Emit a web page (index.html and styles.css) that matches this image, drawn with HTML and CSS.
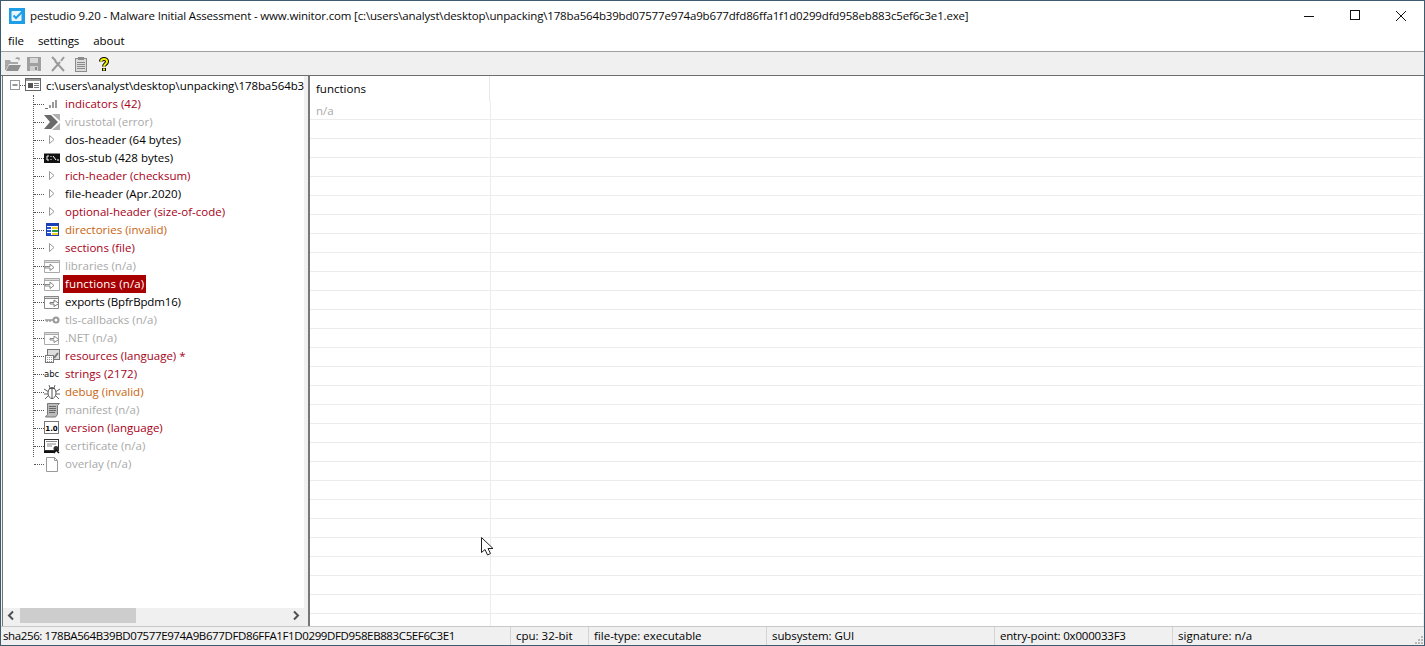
FILE: index.html
```html
<!DOCTYPE html>
<html lang="en">
<head>
<meta charset="utf-8">
<title>pestudio 9.20</title>
<link rel="stylesheet" href="styles.css">
</head>
<body>
<div class="window">
  <header class="titlebar">
    <svg class="app-icon" width="16" height="16" viewBox="0 0 16 16"><rect width="16" height="16" fill="#1f9ee8"/><rect x="2.500" y="3" width="10" height="10" rx="1" fill="#e8f5fd"/><path d="M4.500 7.500l2.500 2.500L14 3" fill="none" stroke="#1f9ee8" stroke-width="2"/></svg>
    <span class="title-text">pestudio 9.20 - Malware Initial Assessment - www.winitor.com [c:\users\analyst\desktop\unpacking\178ba564b39bd07577e974a9b677dfd86ffa1f1d0299dfd958eb883c5ef6c3e1.exe]</span>
    <div class="win-buttons">
      <svg class="win-btn" width="46" height="29" viewBox="0 0 46 29"><path d="M18 15.500h10" stroke="#111" fill="none"/></svg>
      <svg class="win-btn" width="46" height="29" viewBox="0 0 46 29"><rect x="18.500" y="9.500" width="9" height="9" stroke="#111" fill="none"/></svg>
      <svg class="win-btn" width="46" height="29" viewBox="0 0 46 29"><path d="M18 10l10 10M28 10L18 20" stroke="#111" fill="none"/></svg>
    </div>
  </header>
  <nav class="menubar"><span>file</span><span>settings</span><span>about</span></nav>
  <div class="toolbar">
    <svg class="tb-folder" width="18" height="16" viewBox="0 0 18 16"><path d="M1 14V4h5l1 2h7v2H5L2 14z" fill="#a8a8a8"/><path d="M5 9h12l-3 6H2z" fill="#909090"/><path d="M11 3l2-2 3 1-1 3-1-2z" fill="#a0a0a0"/></svg>
    <svg class="tb-save" width="16" height="16" viewBox="0 0 16 16"><path d="M1 1h14v14H1z" fill="#a0a0a0"/><rect x="4" y="2" width="8" height="5" fill="#d8d8d8"/><rect x="4" y="10" width="8" height="5" fill="#cfcfcf"/><rect x="9" y="11" width="2" height="3" fill="#8a8a8a"/></svg>
    <svg width="16" height="16" viewBox="0 0 16 16"><path d="M2 15L10 6M14 15L5 5M2 1l4 4M14 1l-3 4" stroke="#9a9a9a" stroke-width="2" fill="none"/></svg>
    <svg width="14" height="16" viewBox="0 0 14 16"><rect x="1.500" y="2.500" width="11" height="13" fill="#dcdcdc" stroke="#8c8c8c"/><rect x="4" y="1" width="6" height="3" fill="#8c8c8c"/><path d="M3 6.500h8M3 8.500h8M3 10.500h8M3 12.500h8" stroke="#8c8c8c"/></svg>
    <svg class="tb-help" width="12" height="16" viewBox="0 0 12 16"><path d="M3 5.500C3 2 9 2 9 5.500 9 8 6 8 6 10.500" fill="none" stroke="#000" stroke-width="4"/><path d="M6 12v3" stroke="#000" stroke-width="4"/><path d="M3 5.500C3 2 9 2 9 5.500 9 8 6 8 6 10.500" fill="none" stroke="#f5f000" stroke-width="2"/><path d="M6 12.500v2" stroke="#f5f000" stroke-width="2"/></svg>
  </div>
  <main class="panes">
    <section class="tree-pane">
      <div class="tree">
        <div class="root-row">
          <svg class="expander" width="11" height="11" viewBox="0 0 11 11"><rect x=".5" y=".5" width="9" height="9" fill="#fff" stroke="#999"/><path d="M2.500 5h5" stroke="#333"/></svg>
          <i class="dash short"></i>
          <svg class="ico" width="16" height="14" viewBox="0 0 16 14"><rect x=".5" y=".5" width="15" height="12" fill="#fff" stroke="#666"/><rect x="1" y="1" width="14" height="2" fill="#999"/><rect x="3" y="5" width="5" height="5" fill="#555"/><path d="M9 5.500h5M9 7.500h5M9 9.500h5" stroke="#777"/></svg>
          <span class="root-label">c:\users\analyst\desktop\unpacking\178ba564b3</span>
        </div>
        <ul class="nodes">
          <li><i class="dash"></i><svg class="ico" width="16" height="16" viewBox="0 0 16 16"><path d="M5 12h2V9H5zM8 12h2V6H8zM11 12h2V4h-2z" fill="#9a9a9a"/><path d="M1 12.500h3" stroke="#777"/></svg><span class="red">indicators (42)</span></li>
          <li><i class="dash"></i><svg class="ico" width="16" height="16" viewBox="0 0 16 16"><path d="M0 1h7l7 7-7 7H0l6-7z" fill="#6a6a6a"/><path d="M8 0h8v7zM8 16h8V9z" fill="#b0b0b0"/></svg><span class="off">virustotal (error)</span></li>
          <li><i class="dash"></i><svg class="ico" width="16" height="16" viewBox="0 0 16 16"><path d="M5.500 3.500l4.500 4-4.500 4z" fill="#fff" stroke="#999"/></svg><span class="ok">dos-header (64 bytes)</span></li>
          <li><i class="dash"></i><svg class="ico" width="16" height="16" viewBox="0 0 16 16"><rect y="3" width="16" height="10" fill="#111"/><rect y="3" width="16" height="1" fill="#888"/><path d="M5 6H3v4h2M7 6v1M7 9v1M9 6l3 4M13 10h2" stroke="#fff" fill="none"/></svg><span class="ok">dos-stub (428 bytes)</span></li>
          <li><i class="dash"></i><svg class="ico" width="16" height="16" viewBox="0 0 16 16"><path d="M5.500 3.500l4.500 4-4.500 4z" fill="#fff" stroke="#999"/></svg><span class="red">rich-header (checksum)</span></li>
          <li><i class="dash"></i><svg class="ico" width="16" height="16" viewBox="0 0 16 16"><path d="M5.500 3.500l4.500 4-4.500 4z" fill="#fff" stroke="#999"/></svg><span class="ok">file-header (Apr.2020)</span></li>
          <li><i class="dash"></i><svg class="ico" width="16" height="16" viewBox="0 0 16 16"><path d="M5.500 3.500l4.500 4-4.500 4z" fill="#fff" stroke="#999"/></svg><span class="red">optional-header (size-of-code)</span></li>
          <li><i class="dash"></i><svg class="ico" width="16" height="16" viewBox="0 0 16 16"><rect x="2.500" y="1.500" width="12" height="12" fill="#fff" stroke="#1a3fb5"/><path d="M2 1h13v3H2z" fill="#1a3fb5"/><path d="M3 5h4v2H3zM3 8h4v2H3zM3 11h4v2H3z" fill="#2255cc"/><path d="M8 5h6v2H8zM8 11h6v2H8z" fill="#f0d020"/><path d="M8 8h6v2H8z" fill="#2a9a40"/></svg><span class="warn">directories (invalid)</span></li>
          <li><i class="dash"></i><svg class="ico" width="16" height="16" viewBox="0 0 16 16"><path d="M5.500 3.500l4.500 4-4.500 4z" fill="#fff" stroke="#999"/></svg><span class="red">sections (file)</span></li>
          <li><i class="dash"></i><svg class="ico" width="16" height="16" viewBox="0 0 16 16"><path d="M.5 2.500h15v12H.5z" fill="#fff" stroke="#aaa"/><path d="M.5 2.500h15v2H.5z" fill="#ddd" stroke="#aaa"/><path d="M1 8.500h5V6l4 3.500-4 3V10H1z" fill="#fff" stroke="#888"/></svg><span class="off">libraries (n/a)</span></li>
          <li><i class="dash"></i><svg class="ico" width="16" height="16" viewBox="0 0 16 16"><path d="M.5 2.500h15v12H.5z" fill="#fff" stroke="#aaa"/><path d="M.5 2.500h15v2H.5z" fill="#ddd" stroke="#aaa"/><path d="M1 8.500h5V6l4 3.500-4 3V10H1z" fill="#fff" stroke="#888"/></svg><span class="selected">functions (n/a)</span></li>
          <li><i class="dash"></i><svg class="ico" width="16" height="16" viewBox="0 0 16 16"><path d="M.5 2.500h14v12H.5z" fill="#fff" stroke="#888"/><path d="M.5 2.500h14v2H.5z" fill="#ddd" stroke="#888"/><path d="M6 8.500h4V6l5 3.500-5 3V10H6z" fill="#fff" stroke="#777"/></svg><span class="ok tight">exports (BpfrBpdm16)</span></li>
          <li><i class="dash"></i><svg class="ico" width="16" height="16" viewBox="0 0 16 16"><circle cx="12" cy="8" r="2.500" fill="none" stroke="#999" stroke-width="2"/><path d="M1 8h8M3 8v2M6 8v2" stroke="#999" stroke-width="1.500"/></svg><span class="off">tls-callbacks (n/a)</span></li>
          <li><i class="dash"></i><svg class="ico" width="16" height="16" viewBox="0 0 16 16"><path d="M.5 2.500h14v12H.5z" fill="#fff" stroke="#aaa"/><path d="M.5 2.500h14v2H.5z" fill="#ddd" stroke="#aaa"/><path d="M6 8.500h4V6l5 3.500-5 3V10H6z" fill="#fff" stroke="#888"/></svg><span class="off">.NET (n/a)</span></li>
          <li><i class="dash"></i><svg class="ico" width="16" height="16" viewBox="0 0 16 16"><rect x="3.500" y="1.500" width="12" height="10" fill="#ddd" stroke="#777"/><rect x="1.500" y="7.500" width="8" height="7" fill="#fff" stroke="#777"/><path d="M3 9.500h5M3 11.500h5M3 13.500h5" stroke="#999" stroke-dasharray="1 1"/><path d="M10 10l4-5" stroke="#777" stroke-width="2"/></svg><span class="red">resources (language) *</span></li>
          <li><i class="dash"></i><span class="abc">abc</span><span class="red">strings (2172)</span></li>
          <li><i class="dash"></i><svg class="ico" width="16" height="16" viewBox="0 0 16 16"><ellipse cx="8" cy="9" rx="4" ry="5.500" fill="#fff" stroke="#555"/><path d="M5 4.500h6M8 5v9" stroke="#555"/><path d="M0 5l4 2.500M16 5l-4 2.500M0 10h4M16 10h-4M1 15l3-3M15 15l-3-3M5 1l1 3M11 1l-1 3" stroke="#666" fill="none"/></svg><span class="warn">debug (invalid)</span></li>
          <li><i class="dash"></i><svg class="ico" width="16" height="16" viewBox="0 0 16 16"><path d="M3.500 1.500h12l-2 2v9l-2 2.500h-10l2-2.500z" fill="#bbb" stroke="#777"/><path d="M5 4.500h7M5 6.500h7M5 8.500h7M5 10.500h6" stroke="#666"/></svg><span class="off">manifest (n/a)</span></li>
          <li><i class="dash"></i><svg class="ico" width="16" height="16" viewBox="0 0 16 16"><rect x=".5" y="1.500" width="14" height="12" fill="#fff" stroke="#777"/><text class="ver" x="7.500" y="10.500" text-anchor="middle">1.0</text></svg><span class="red">version (language)</span></li>
          <li><i class="dash"></i><svg class="ico" width="16" height="16" viewBox="0 0 16 16"><rect x=".5" y="1.500" width="14" height="11" fill="#fff" stroke="#333"/><path d="M2 3.500h11M3 6h9M3 8h5" stroke="#888"/><path d="M0 14h11" stroke="#111" stroke-width="2"/><circle cx="12" cy="10.500" r="2.500" fill="#333"/><path d="M10 15l2-3 3 3" stroke="#111" fill="none" stroke-width="1.500"/></svg><span class="off">certificate (n/a)</span></li>
          <li><i class="dash"></i><svg class="ico" width="16" height="16" viewBox="0 0 16 16"><path d="M2.500 1.500h8l3 3v11h-11z" fill="#fff" stroke="#999"/><path d="M10.500 1.500v3h3" fill="none" stroke="#999"/></svg><span class="off">overlay (n/a)</span></li>
        </ul>
      </div>
      <div class="hscroll">
        <svg width="17" height="15" viewBox="0 0 17 15"><path d="M10 3.500L6 7.500l4 4" fill="none" stroke="#505050" stroke-width="2"/></svg>
        <div class="track"><div class="thumb"></div></div>
        <svg width="17" height="15" viewBox="0 0 17 15"><path d="M7 3.500l4 4-4 4" fill="none" stroke="#505050" stroke-width="2"/></svg>
      </div>
    </section>
    <section class="list-pane">
      <div class="list-head"><div class="head-cell">functions</div></div>
      <div class="list-rows">
        <div class="row"><div class="cell">n/a</div></div>
        <div class="row"><div class="cell"></div></div><div class="row"><div class="cell"></div></div><div class="row"><div class="cell"></div></div><div class="row"><div class="cell"></div></div><div class="row"><div class="cell"></div></div><div class="row"><div class="cell"></div></div><div class="row"><div class="cell"></div></div><div class="row"><div class="cell"></div></div><div class="row"><div class="cell"></div></div><div class="row"><div class="cell"></div></div><div class="row"><div class="cell"></div></div><div class="row"><div class="cell"></div></div><div class="row"><div class="cell"></div></div><div class="row"><div class="cell"></div></div><div class="row"><div class="cell"></div></div><div class="row"><div class="cell"></div></div><div class="row"><div class="cell"></div></div><div class="row"><div class="cell"></div></div><div class="row"><div class="cell"></div></div><div class="row"><div class="cell"></div></div><div class="row"><div class="cell"></div></div><div class="row"><div class="cell"></div></div><div class="row"><div class="cell"></div></div><div class="row"><div class="cell"></div></div><div class="row"><div class="cell"></div></div><div class="row"><div class="cell"></div></div><div class="row"><div class="cell"></div></div>
      </div>
      <svg class="cursor" width="14" height="20" viewBox="0 0 14 20"><path d="M.5.500v15l3.500-3 2.500 5.500 3-1.500-2.500-5h5z" fill="#fff" stroke="#222"/></svg>
    </section>
  </main>
  <footer class="statusbar">
    <div class="st st-hash">sha256: 178BA564B39BD07577E974A9B677DFD86FFA1F1D0299DFD958EB883C5EF6C3E1</div>
    <div class="st st-cpu">cpu: 32-bit</div>
    <div class="st st-type">file-type: executable</div>
    <div class="st st-sub">subsystem: GUI</div>
    <div class="st st-entry">entry-point: 0x000033F3</div>
    <div class="st st-sig"><span>signature: n/a</span>
      <svg class="grip" width="10" height="10" viewBox="0 0 10 10"><path d="M7 1h2v2H7zM4 4h2v2H4zM7 4h2v2H7zM1 7h2v2H1zM4 7h2v2H4zM7 7h2v2H7z" fill="#b8b8b8"/></svg>
    </div>
  </footer>
</div>
</body>
</html>
```

FILE: styles.css
```css
* { box-sizing: border-box; }
html, body { margin: 0; padding: 0; }
body {
  width: 1425px;
  height: 646px;
  overflow: hidden;
  font-family: "Open Sans", "Noto Sans", sans-serif;
  font-size: 11.5px;
  color: #000;
  background: #f0f0f0;
}
.window {
  width: 1425px;
  height: 646px;
  display: flex;
  flex-direction: column;
  border: 1px solid #3f5b70;
  overflow: hidden;
}
.titlebar {
  height: 29px;
  flex: none;
  display: flex;
  align-items: center;
  background: #fff;
  padding-left: 8px;
}
.app-icon { flex: none; margin-right: 5px; }
.title-text { flex: 1; white-space: nowrap; color: #0a0a0a; letter-spacing: -0.16px; }
.win-buttons { display: flex; flex: none; }
.win-btn { display: block; }
.menubar {
  height: 22px;
  flex: none;
  display: flex;
  align-items: center;
  gap: 14px;
  padding-left: 7px;
  padding-bottom: 1px;
  background: #fff;
  border-bottom: 1px solid #a0a0a0;
  letter-spacing: -0.06px;
}
.toolbar {
  height: 24px;
  flex: none;
  display: flex;
  align-items: center;
  gap: 8px;
  padding-left: 3px;
  background: #f0f0f0;
  border-bottom: 1px solid #6f6f6f;
}
.tb-folder { margin-right: -4px; }
.tb-help { margin-left: 2px; }
.panes {
  flex: 1;
  min-height: 0;
  display: flex;
  gap: 4px;
  padding-left: 1px;
  padding-right: 1px;
}
.tree-pane {
  width: 302px;
  flex: none;
  display: flex;
  flex-direction: column;
  background: #fff;
  border-left: 1px solid #777;
}
.tree { flex: 1; min-height: 0; overflow: hidden; padding-top: 1px; }
.root-row {
  height: 18px;
  display: flex;
  align-items: center;
  padding-left: 7px;
  padding-bottom: 2px;
  white-space: nowrap;
}
.root-label { letter-spacing: -0.08px; }
.expander { flex: none; }
.dash {
  display: block;
  flex: none;
  width: 10px;
  border-top: 1px dotted #555;
}
.dash.short { width: 5px; margin-left: -1px; }
.ico { flex: none; display: block; }
.root-row .ico { margin-right: 5px; }
.nodes {
  list-style: none;
  margin: 0 0 0 30px;
  padding: 0;
  position: relative;
  border-left: 1px dotted #555;
  height: 370px;
}
.nodes::after {
  content: "";
  position: absolute;
  left: -1px;
  bottom: -1px;
  width: 1px;
  height: 9px;
  background: #fff;
}
.nodes li {
  height: 18px;
  display: flex;
  align-items: center;
  white-space: nowrap;
}
.nodes li .ico { margin-right: 3px; }
.nodes span { padding: 0 2px; line-height: 18px; }
.abc {
  flex: none;
  width: 16px;
  margin-right: 3px;
  font-family: "DejaVu Sans", sans-serif;
  font-size: 8.5px;
  color: #111;
  padding: 0 !important;
}
.red { color: #a80018; }
.warn { color: #c8640f; }
.off { color: #a9a9a9; }
.ok { color: #000; }
.tight { letter-spacing: -0.15px; }
.selected { background: #a80000; color: #fff; letter-spacing: 0.13px; }
.ver { font-family: "DejaVu Sans", sans-serif; font-size: 7px; font-weight: 700; fill: #000; }
.hscroll {
  height: 18px;
  flex: none;
  display: flex;
  align-items: flex-start;
  background: #f0f0f0;
}
.hscroll svg { flex: none; display: block; }
.track { flex: 1; }
.thumb { width: 116px; height: 15px; background: #cdcdcd; }
.list-pane {
  flex: 1;
  min-width: 0;
  position: relative;
  background: #fff;
  border-left: 2px solid #777;
  overflow: hidden;
}
.list-head { height: 25px; }
.head-cell {
  width: 180px;
  height: 25px;
  line-height: 26px;
  padding-left: 6px;
  border-right: 1px solid #e8e8e8;
}
.row { height: 19px; border-bottom: 1px solid #ececec; }
.cell {
  width: 181px;
  height: 18px;
  line-height: 20px;
  padding-left: 6px;
  color: #a9a9a9;
  border-right: 1px solid #ececec;
}
.cursor { position: absolute; left: 171px; top: 461px; }
.statusbar {
  height: 19px;
  flex: none;
  display: flex;
  align-items: center;
  background: #f0f0f0;
  border-top: 1px solid #c8c8c8;
}
.st { height: 18px; line-height: 18px; white-space: nowrap; padding-left: 5px; border-left: 1px solid #d4d4d4; flex: none; }
.st-hash { width: 509px; padding-left: 2px; border-left: 0; letter-spacing: -0.38px; }
.st-cpu { width: 78px; }
.st-type { width: 178px; }
.st-sub { width: 228px; letter-spacing: -0.1px; }
.st-entry { width: 178px; letter-spacing: -0.2px; }
.st-sig { flex: 1; display: flex; justify-content: space-between; align-items: flex-end; }
.st-sig span { align-self: center; }
.grip { display: block; }
```
